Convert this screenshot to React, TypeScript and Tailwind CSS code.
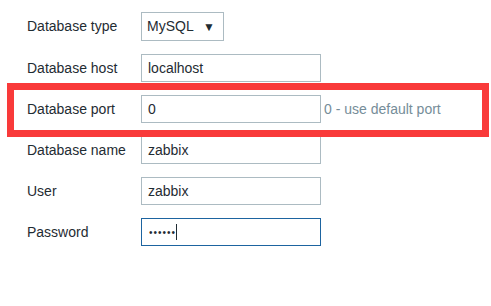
import React from 'react';

type Row = {
  label: string;
  value: string;
  kind?: 'select' | 'password';
  hint?: string;
};

const rows: Row[] = [
  { label: 'Database type', value: 'MySQL', kind: 'select' },
  { label: 'Database host', value: 'localhost' },
  { label: 'Database port', value: '0', hint: '0 - use default port' },
  { label: 'Database name', value: 'zabbix' },
  { label: 'User', value: 'zabbix' },
  { label: 'Password', value: '••••••', kind: 'password' },
];

function Field({ row }: { row: Row }) {
  if (row.kind === 'select') {
    return (
      <div className="flex h-[29px] w-[83px] items-center justify-between border border-[#acbbc2] bg-white pl-[5px] pr-[8px]">
        <span>{row.value}</span>
        <span className="text-[12px] leading-none">▼</span>
      </div>
    );
  }

  if (row.kind === 'password') {
    return (
      <div className="flex h-[28px] w-[180px] items-center border border-[#1d64a0] bg-white pl-[7px]">
        <span className="text-[10px] tracking-[1px]">{row.value}</span>
        <span className="h-[16px] w-px bg-[#1f2c33]" />
      </div>
    );
  }

  return (
    <div className="flex h-[28px] w-[180px] items-center border border-[#acbbc2] bg-white pl-[6px]">
      {row.value}
    </div>
  );
}

export default function App() {
  return (
    <div className="relative h-[306px] w-[491px] overflow-hidden bg-white font-['Liberation_Sans',Arial,sans-serif] text-[14px] text-[#1f2c33]">
      <div className="flex flex-col gap-[13px] pl-[27px] pt-[12px]">
        {rows.map((row) => (
          <div key={row.label} className="flex items-center">
            <div className="w-[114px]">{row.label}</div>
            <Field row={row} />
            {row.hint && <span className="ml-[3px] text-[#768d99]">{row.hint}</span>}
          </div>
        ))}
      </div>

      {/* annotation box over the port row */}
      <div className="absolute left-[7px] top-[83px] h-[54px] w-[482px] border-[7px] border-[#f93a3a]" />
    </div>
  );
}
